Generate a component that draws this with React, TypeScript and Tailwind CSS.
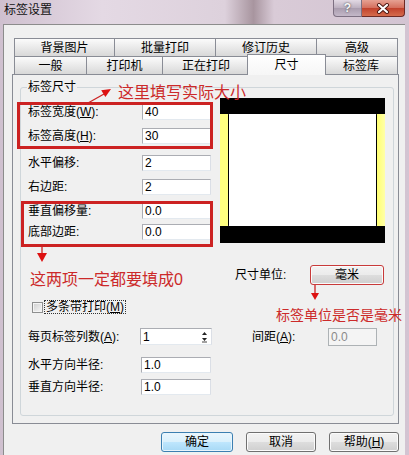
import React from 'react';

const inputCls =
  'h-[16px] flex items-center bg-white border border-[#abadb3] border-r-[#dbdfe6] border-b-[#e3e9ef] pl-[2px] text-[12px] leading-[14px] text-black';
const btnCls =
  'h-[20px] flex items-center justify-center rounded-[3px] border border-[#707070] bg-[linear-gradient(180deg,#f2f2f2_0%,#ebebeb_50%,#dddddd_51%,#cfcfcf_100%)] shadow-[inset_0_0_0_1px_#fbfbfb] text-[12px] leading-[14px] text-black';
const tabCls =
  'h-[18px] flex items-center justify-center border-l border-t border-[#898c95] bg-[linear-gradient(180deg,#fbfbfb,#d8d8d8)] text-[12px] leading-[14px] text-black';

function Field({ value, className }: { value: string; className: string }) {
  return <div className={`${inputCls} ${className}`}>{value}</div>;
}

function Label({ children, className }: { children: React.ReactNode; className: string }) {
  return <div className={`text-[12px] leading-[16px] text-black whitespace-nowrap ${className}`}>{children}</div>;
}

export default function App() {
  return (
    <div className="w-[409px] h-[455px] relative overflow-hidden flex flex-col bg-[linear-gradient(90deg,#cfc0cf_0%,#e4d9e4_25%,#ddd1dc_55%,#a8959f_62%,#d9cbd7_67%,#d3c4d2_100%)] font-['Liberation_Sans','Noto_Sans_CJK_SC',sans-serif]">
      {/* Title bar */}
      <div className="h-[24px] shrink-0 flex items-start">
        <div className="pl-[4px] pt-[2px] text-[12px] leading-[16px] text-[#111]">标签设置</div>
        <div className="ml-auto mr-[4px] flex">
          <div className="w-[29px] h-[17px] flex items-center justify-center rounded-bl-[4px] border border-t-0 border-[#7d7082] bg-[linear-gradient(180deg,#e2d9e4,#bcb0c0_50%,#a99cae_51%,#c4b8c8)] text-[12px] font-bold text-[#f6f6f6] [text-shadow:0_0_2px_#333]">
            ?
          </div>
          <div className="w-[43px] h-[17px] flex items-center justify-center rounded-br-[4px] border border-t-0 border-l-0 border-[#6e2a24] bg-[linear-gradient(180deg,#e6a193,#d46e5c_50%,#c1412c_51%,#d56b4c)]">
            <svg width="14" height="11" viewBox="0 0 14 11">
              <path d="M3 2 L11 9 M11 2 L3 9" stroke="#4a1510" strokeWidth="4" strokeLinecap="round" />
              <path d="M3 2 L11 9 M11 2 L3 9" stroke="#ffffff" strokeWidth="2.2" strokeLinecap="round" />
            </svg>
          </div>
        </div>
      </div>

      {/* Client area */}
      <div className="flex-1 ml-[3px] mr-[4px] border-l border-t border-[#8c8c8c] bg-[#f0f0f0] flex flex-col">
        {/* Tabs */}
        <div className="pl-[10px] pt-[13px]">
          <div className="flex h-[18px]">
            <div className={`${tabCls} w-[100px]`}>背景图片</div>
            <div className={`${tabCls} w-[101px]`}>批量打印</div>
            <div className={`${tabCls} w-[101px]`}>修订历史</div>
            <div className={`${tabCls} w-[82px] border-r`}>高级</div>
          </div>
          <div className="flex h-[18px] items-end">
            <div className={`${tabCls} w-[72px]`}>一般</div>
            <div className={`${tabCls} w-[76px]`}>打印机</div>
            <div className={`${tabCls} w-[87px]`}>正在打印</div>
            <div className="relative z-10 top-[1px] -mx-[2px] w-[79px] h-[21px] flex items-center justify-center border-l border-t border-r border-[#898c95] bg-[linear-gradient(180deg,#ffffff,#f6f6f6)] text-[12px] leading-[14px] text-black">
              尺寸
            </div>
            <div className={`${tabCls} w-[74px] border-r`}>标签库</div>
          </div>
        </div>

        {/* Tab page */}
        <div className="ml-[8px] w-[387px] h-[350px] shrink-0 border border-[#898c95] bg-[#f0f0f0]">
          <div className="relative ml-[7px] mt-[12px] w-[374px] h-[329px] rounded-[3px] border border-[#cfd6da]">
            <div className="absolute left-[6px] top-[-9px] px-[1px] bg-[#f0f0f0] text-[12px] leading-[16px] text-black">标签尺寸</div>

            <div className="flex h-[240px]">
              {/* left column */}
              <div className="w-[192px] flex flex-col">
                <div className="mt-[16px] h-[16px] flex items-center pl-[7px]">
                  <Label className="w-[114px]">标签宽度(<u>W</u>):</Label>
                  <Field value="40" className="w-[69px]" />
                </div>
                <div className="mt-[8px] h-[16px] flex items-center pl-[7px]">
                  <Label className="w-[114px]">标签高度(<u>H</u>):</Label>
                  <Field value="30" className="w-[69px]" />
                </div>
                <div className="mt-[11px] h-[16px] flex items-center pl-[7px]">
                  <Label className="w-[114px]">水平偏移:</Label>
                  <Field value="2" className="w-[69px]" />
                </div>
                <div className="mt-[8px] h-[16px] flex items-center pl-[7px]">
                  <Label className="w-[114px]">右边距:</Label>
                  <Field value="2" className="w-[69px]" />
                </div>
                <div className="mt-[8px] h-[16px] flex items-center pl-[7px]">
                  <Label className="w-[114px]">垂直偏移量:</Label>
                  <Field value="0.0" className="w-[69px]" />
                </div>
                <div className="mt-[5px] h-[16px] flex items-center pl-[7px]">
                  <Label className="w-[114px]">底部边距:</Label>
                  <Field value="0.0" className="w-[69px]" />
                </div>
                <div className="mt-[30px] pl-[9px] text-[16px] leading-[20px] text-[#cc2a2a] whitespace-nowrap">这两项一定都要填成0</div>
                <div className="mt-[10px] h-[14px] flex items-center pl-[11px]">
                  <div className="w-[11px] h-[11px] border border-[#8e8f8f] bg-[linear-gradient(135deg,#cfcfcf,#f7f7f7)] shadow-[inset_0_0_0_1px_#f4f4f4]" />
                  <div className="ml-[1px] border border-dotted border-[#333] px-[1px] text-[12px] leading-[12px] text-black whitespace-nowrap">
                    多条带打印(<u>M</u>)
                  </div>
                </div>
              </div>

              {/* right column */}
              <div className="ml-[7px] w-[165px] flex flex-col">
                <div className="mt-[10px] w-[165px] h-[145px] bg-black flex flex-col">
                  <div className="h-[16px]" />
                  <div className="h-[112px] flex">
                    <div className="w-[8px] bg-[#ffff80]" />
                    <div className="flex-1 bg-white border-x border-black rounded-[1px]" />
                    <div className="w-[8px] bg-[linear-gradient(90deg,#ffff70,#ffffa8)]" />
                  </div>
                </div>
                <div className="mt-[22px] h-[20px] flex items-center pl-[15px]">
                  <Label className="w-[75px]">尺寸单位:</Label>
                  <div className={`${btnCls} w-[74px] border-[#c83a3a]`}>毫米</div>
                </div>
                <div className="mt-[21px] pl-[56px] text-[14px] leading-[18px] text-[#cc2a2a] whitespace-nowrap">标签单位是否是毫米</div>
              </div>
            </div>

            {/* bottom rows */}
            <div className="h-[17px] flex items-center pl-[7px]">
              <Label className="w-[112px]">每页标签列数(<u>A</u>):</Label>
              <div className={`${inputCls} h-[17px] w-[72px] justify-between pr-[2px]`}>
                <span>1</span>
                <svg width="9" height="13" viewBox="0 0 9 13">
                  <path d="M2 5 L4.5 2 L7 5 Z" fill="#222" />
                  <path d="M2 8 L7 8 L4.5 11 Z" fill="#222" />
                  <path d="M2 12 L7 12" stroke="#444" strokeWidth="1" />
                </svg>
              </div>
              <Label className="ml-[40px] w-[76px]">间距(<u>A</u>):</Label>
              <div className="w-[49px] h-[18px] flex items-center pl-[2px] border border-[#adb2b5] bg-[#f4f4f4] text-[12px] leading-[14px] text-[#8a8a8a]">0.0</div>
            </div>
            <div className="mt-[12px] h-[16px] flex items-center pl-[7px]">
              <Label className="w-[113px]">水平方向半径:</Label>
              <Field value="1.0" className="w-[70px]" />
            </div>
            <div className="mt-[6px] h-[16px] flex items-center pl-[7px]">
              <Label className="w-[113px]">垂直方向半径:</Label>
              <Field value="1.0" className="w-[70px]" />
            </div>
          </div>
        </div>

        {/* dialog buttons */}
        <div className="mt-[8px] flex justify-end pr-[6px] gap-[13px]">
          <div className="w-[72px] h-[20px] flex items-center justify-center rounded-[3px] border border-[#3c7fb1] bg-[linear-gradient(180deg,#eaf6fd_0%,#d9f0fc_50%,#bee6fd_51%,#a7d9f5_100%)] shadow-[inset_0_0_0_1px_#e8f5fc] text-[12px] leading-[14px] text-black">
            确定
          </div>
          <div className={`${btnCls} w-[70px]`}>取消</div>
          <div className={`${btnCls} w-[70px]`}>帮助(<u>H</u>)</div>
        </div>
      </div>

      {/* annotations */}
      <div className="absolute left-[17px] top-[102px] w-[196px] h-[47px] border-[3px] border-[#cc2222]" />
      <div className="absolute left-[21px] top-[201px] w-[192px] h-[46px] border-[3px] border-[#cc2222]" />
      <svg className="absolute left-[84px] top-[84px]" width="30" height="22" viewBox="0 0 30 22">
        <path d="M4 19 L20 10" stroke="#cc2222" strokeWidth="1.3" />
        <path d="M27 5 L21.4 13.1 L17.2 6.3 Z" fill="#dd1111" />
      </svg>
      <div className="absolute left-[118px] top-[83px] text-[16px] leading-[20px] text-[#cc2a2a] whitespace-nowrap">这里填写实际大小</div>
      <svg className="absolute left-[36px] top-[247px]" width="12" height="16" viewBox="0 0 12 16">
        <path d="M6 0 L6 7" stroke="#cc2222" strokeWidth="1.3" />
        <path d="M1 6 L11 6 L6 15 Z" fill="#dd1111" />
      </svg>
      <svg className="absolute left-[309px] top-[285px]" width="12" height="16" viewBox="0 0 12 16">
        <path d="M6 0 L6 8" stroke="#cc2222" strokeWidth="1.3" />
        <path d="M2 8 L10 8 L6 15 Z" fill="#dd1111" />
      </svg>
    </div>
  );
}
